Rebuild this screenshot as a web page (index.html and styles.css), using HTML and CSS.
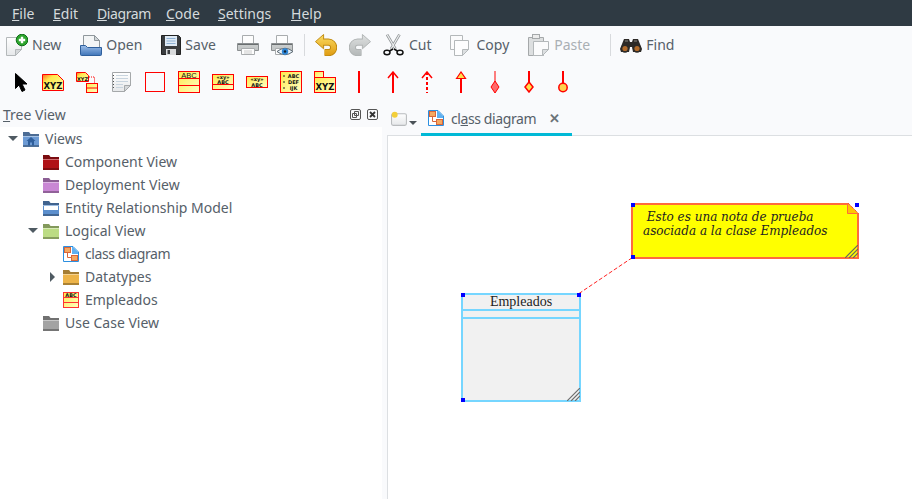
FILE: index.html
```html
<!DOCTYPE html>
<html lang="en">
<head>
    <meta charset="UTF-8">
    <meta name="viewport" content="width=device-width, initial-scale=1.0">
    <title>class diagram</title>
    <link rel="stylesheet" href="styles.css">
</head>
<body>
    <svg class="defs" width="0" height="0">
        <defs>
            <linearGradient id="yellow" x1="0" y1="0" x2="1" y2="1">
                <stop offset="0" stop-color="#ff6a1a"/>
                <stop offset="0.3" stop-color="#ffe94d"/>
                <stop offset="1" stop-color="#ffffa8"/>
            </linearGradient>
            <linearGradient id="cream" x1="0" y1="0" x2="1" y2="1">
                <stop offset="0" stop-color="#ffe94d"/>
                <stop offset="1" stop-color="#ffffc4"/>
            </linearGradient>
            <linearGradient id="paper" x1="0" y1="0" x2="0" y2="1">
                <stop offset="0" stop-color="#ffffff"/>
                <stop offset="1" stop-color="#e6e8ea"/>
            </linearGradient>
            <linearGradient id="gold" gradientUnits="userSpaceOnUse" x1="0" y1="0" x2="0" y2="22">
                <stop offset="0" stop-color="#fbdc62"/>
                <stop offset="1" stop-color="#e09c12"/>
            </linearGradient>
            <linearGradient id="silver" gradientUnits="userSpaceOnUse" x1="0" y1="0" x2="0" y2="22">
                <stop offset="0" stop-color="#dfe1e1"/>
                <stop offset="1" stop-color="#b4b8b8"/>
            </linearGradient>
            <linearGradient id="blue" x1="0" y1="0" x2="0" y2="1">
                <stop offset="0" stop-color="#9bbde8"/>
                <stop offset="1" stop-color="#3f74b8"/>
            </linearGradient>
            <symbol id="folder" viewBox="0 0 16 16">
                <path d="M0 1h6l1.500 2H16v13H0z" fill="currentColor"/>
                <path d="M0 1h6l1.500 2H16v2H0z" fill="#000" opacity=".3"/>
                <path d="M0 5h16v1H0z" fill="#fff" opacity=".4"/>
                <path d="M0 14h16v2H0z" fill="#000" opacity=".28"/>
            </symbol>
            <symbol id="diagram" viewBox="0 0 16 16">
                <path d="M.5.5h9.500l5.500 5.500v9.500H.5z" fill="#fff" stroke="#2c8fe0"/>
                <path d="M9 1h1l5 5v2H9z" fill="#5fb0f0"/>
                <rect x="1.500" y="1.500" width="6" height="5" fill="#f5a860" stroke="#d9663a"/>
                <rect x="8.500" y="9.500" width="6" height="5" fill="#f5a860" stroke="#d9663a"/>
                <path d="M4.500 6.500v5h4" fill="none" stroke="#d9663a"/>
            </symbol>
        </defs>
    </svg>

    <div class="menubar">
        <span><u>F</u>ile</span>
        <span><u>E</u>dit</span>
        <span class="tight"><u>D</u>iagram</span>
        <span><u>C</u>ode</span>
        <span><u>S</u>ettings</span>
        <span><u>H</u>elp</span>
    </div>

    <div class="toolbar">
        <div class="tool labelled">
            <svg class="icon" viewBox="0 0 22 22">
                <path d="M.5 3.500h15v12l-6 6H.5z" fill="url(#paper)" stroke="#b4b8ba"/>
                <path d="M9.500 21.500v-6h6z" fill="#d5d8da" stroke="#b4b8ba"/>
                <circle cx="16" cy="6" r="5.800" fill="#2da52d" stroke="#0f6e18"/>
                <path d="M16 2.800v6.400M12.800 6h6.400" stroke="#fff" stroke-width="2.400"/>
            </svg>
            <span>New</span>
        </div>
        <div class="tool labelled">
            <svg class="icon" viewBox="0 0 22 22">
                <path d="M3.500 1.500h11l5 5v8h-16z" fill="#f3f5f6" stroke="#8f979c"/>
                <path d="M14.500 1.500v5h5z" fill="#cfd4d7" stroke="#8f979c"/>
                <path d="M.5 11.500h5l2 2h14v7a1 1 0 0 1-1 1H1.500a1 1 0 0 1-1-1z" fill="url(#blue)" stroke="#2f5f9c"/>
            </svg>
            <span>Open</span>
        </div>
        <div class="tool labelled save-tool">
            <svg class="icon save" viewBox="0 0 20 22">
                <path d="M.5 1.500h17l2 2v17H.5z" fill="#3a3d40" stroke="#222"/>
                <rect x="4" y="2" width="12" height="10" fill="#dfeaf5"/>
                <path d="M5.500 4.500h9M5.500 7h9M5.500 9.500h9" stroke="#8fb2d4"/>
                <rect x="5" y="15" width="10" height="6" fill="#d8dadc"/>
                <rect x="6.500" y="16" width="2.500" height="4" fill="#3a3d40"/>
            </svg>
            <span>Save</span>
        </div>
        <div class="tool">
            <svg class="icon" viewBox="0 0 22 22">
                <path d="M5.500 1.500h11v8h-11z" fill="#fdfdfd" stroke="#a9acae"/>
                <path d="M.5 9.500h21v7H.5z" fill="url(#silver)" stroke="#8b8f91"/>
                <path d="M1 10h20v1H1z" fill="#6a6e70"/>
                <path d="M4.500 14.500h13v6h-13z" fill="#fdfdfd" stroke="#a9acae"/>
                <path d="M7 17h8M7 19h8" stroke="#ccc"/>
            </svg>
        </div>
        <div class="tool">
            <svg class="icon" viewBox="0 0 22 22">
                <path d="M5.500 1.500h11v8h-11z" fill="#fdfdfd" stroke="#a9acae"/>
                <path d="M.5 9.500h21v7H.5z" fill="url(#silver)" stroke="#8b8f91"/>
                <path d="M1 10h20v1H1z" fill="#6a6e70"/>
                <path d="M4.500 14.500h6v6h-6z" fill="#fdfdfd" stroke="#a9acae"/>
                <path d="M6 17.500q8-6.500 16 0-8 6.500-16 0z" fill="#e6f0f8" stroke="#5b6770"/>
                <circle cx="14" cy="17.500" r="3.200" fill="#2f86d6"/>
                <circle cx="14" cy="17.500" r="1.200" fill="#123"/>
            </svg>
        </div>
        <div class="sep"></div>
        <div class="tool">
            <svg class="icon" viewBox="0 0 23 22">
                <path d="M6 8h8a5.500 5.500 0 0 1 0 11h-4" fill="none" stroke="#c08a10" stroke-width="7.500"/>
                <path d="M9 0 .5 7.500 9 15z" fill="url(#gold)" stroke="#c08a10"/>
                <path d="M6 8h8a5.500 5.500 0 0 1 0 11h-4" fill="none" stroke="url(#gold)" stroke-width="5.500"/>
            </svg>
        </div>
        <div class="tool">
            <svg class="icon" viewBox="0 0 23 22">
                <path d="M17 8H9a5.500 5.500 0 0 0 0 11h4" fill="none" stroke="#b0b4b4" stroke-width="7.500"/>
                <path d="M14 0l8.500 7.500L14 15z" fill="url(#silver)" stroke="#b0b4b4"/>
                <path d="M17 8H9a5.500 5.500 0 0 0 0 11h4" fill="none" stroke="url(#silver)" stroke-width="5.500"/>
            </svg>
        </div>
        <div class="tool labelled">
            <svg class="icon" viewBox="0 0 22 22">
                <path d="M4 .5 12.500 15M16.500.5 8 15" stroke="#8f9395" stroke-width="2.600" fill="none"/>
                <path d="M4 .5 12.500 15M16.500.5 8 15" stroke="#eceeef" stroke-width="1.200" fill="none"/>
                <ellipse cx="4" cy="18.500" rx="3" ry="2.200" fill="none" stroke="#111" stroke-width="1.500"/>
                <ellipse cx="17" cy="18.500" rx="3" ry="2.200" fill="none" stroke="#111" stroke-width="1.500"/>
                <path d="M6.500 17 10 15M14.500 17 11 15" stroke="#111" stroke-width="1.500"/>
            </svg>
            <span>Cut</span>
        </div>
        <div class="tool labelled">
            <svg class="icon" viewBox="0 0 22 22">
                <path d="M.5 1.500h12v14H.5z" fill="#fbfbfc" stroke="#b4b8ba"/>
                <path d="M4.500 6.500h14v9l-6 6h-8z" fill="#fdfdfe" stroke="#b4b8ba"/>
                <path d="M12.500 21.500v-6h6z" fill="#dcdfe1" stroke="#b4b8ba"/>
            </svg>
            <span>Copy</span>
        </div>
        <div class="tool labelled disabled">
            <svg class="icon" viewBox="0 0 22 22">
                <path d="M.5 3.500h15v18H.5z" fill="#dddfe0" stroke="#a5a8aa"/>
                <rect x="4.500" y=".5" width="7" height="4" fill="#ececec" stroke="#a5a8aa"/>
                <path d="M5.500 7.500h15v8l-6 6h-9z" fill="#fbfbfc" stroke="#b4b8ba"/>
                <path d="M14.500 21.500v-6h6z" fill="#dcdfe1" stroke="#b4b8ba"/>
            </svg>
            <span>Paste</span>
        </div>
        <div class="sep wide"></div>
        <div class="tool labelled">
            <svg class="icon" viewBox="0 0 22 22">
                <path d="M4 5h5l1 3h2l1-3h5l4 10-1 3H13l-1-5h-2l-1 5H1l-1-3z" fill="#2d2a27"/>
                <circle cx="5" cy="14.500" r="4.200" fill="#2d2a27"/>
                <circle cx="17" cy="14.500" r="4.200" fill="#2d2a27"/>
                <circle cx="5" cy="14.500" r="2.600" fill="#b06a2a"/>
                <circle cx="17" cy="14.500" r="2.600" fill="#b06a2a"/>
                <path d="M5 7h3M14 7h3" stroke="#8a8580"/>
            </svg>
            <span>Find</span>
        </div>
    </div>

    <div class="toolbar palette">
        <div class="shape">
            <svg class="icon" viewBox="0 0 22 22">
                <path d="M7.500 2.500v15l3.500-3.500 3 6.500 3-1.500-3-6h5z" fill="#000" stroke="#000" stroke-linejoin="round"/>
            </svg>
        </div>
        <div class="shape">
            <svg class="icon" viewBox="0 0 22 22">
                <path d="M.5 3.500h15l6 6v10H.5z" fill="url(#yellow)" stroke="#f00"/>
                <text x="11" y="17.500" class="glyph big" text-anchor="middle">XYZ</text>
            </svg>
        </div>
        <div class="shape">
            <svg class="icon" viewBox="0 0 22 22">
                <path d="M.5 1.500h9l3 3v6H.5z" fill="url(#yellow)" stroke="#f00"/>
                <text x="6.500" y="9.500" class="glyph tiny" text-anchor="middle">XYZ</text>
                <path d="M13 6h5.500v6" fill="none" stroke="#f00" stroke-dasharray="1 1"/>
                <rect x="10.500" y="12.500" width="11" height="9" fill="url(#cream)" stroke="#f00"/>
                <path d="M11 17h10" stroke="#f00"/>
            </svg>
        </div>
        <div class="shape">
            <svg class="icon" viewBox="0 0 22 22">
                <path d="M2.500 1.500h18v13l-6 6h-12z" fill="url(#paper)" stroke="#a5a8aa"/>
                <path d="M14.500 20.500v-6h6z" fill="#d5d8da" stroke="#a5a8aa"/>
                <path d="M6 4.500h12M6 7.500h12M6 10.500h12M6 13.500h7M6 16.500h7" stroke="#c8d4de"/>
                <path d="M3.500 4v14" stroke="#555" stroke-dasharray="1 2"/>
            </svg>
        </div>
        <div class="shape">
            <svg class="icon" viewBox="0 0 22 22">
                <rect x="1.500" y="1.500" width="19" height="19" fill="none" stroke="#f00"/>
            </svg>
        </div>
        <div class="shape">
            <svg class="icon" viewBox="0 0 22 22">
                <rect x=".5" y=".5" width="21" height="21" fill="url(#cream)" stroke="#f00"/>
                <path d="M1 7.500h20M1 14.500h20" stroke="#f00"/>
                <text x="11" y="7" class="glyph serif" text-anchor="middle">ABC</text>
            </svg>
        </div>
        <div class="shape">
            <svg class="icon" viewBox="0 0 22 22">
                <rect x=".5" y="3.500" width="21" height="15" fill="url(#cream)" stroke="#f00"/>
                <path d="M1 13.500h20" stroke="#f00"/>
                <text x="11" y="8" class="glyph tiny" text-anchor="middle">«xy»</text>
                <text x="11" y="13" class="glyph tiny" text-anchor="middle">ABC</text>
            </svg>
        </div>
        <div class="shape">
            <svg class="icon" viewBox="0 0 22 22">
                <rect x=".5" y="5.500" width="21" height="11" fill="url(#cream)" stroke="#f00"/>
                <text x="11" y="10" class="glyph tiny" text-anchor="middle">«xy»</text>
                <text x="11" y="15.500" class="glyph tiny" text-anchor="middle">ABC</text>
            </svg>
        </div>
        <div class="shape">
            <svg class="icon" viewBox="0 0 22 22">
                <rect x=".5" y=".5" width="21" height="21" fill="url(#cream)" stroke="#f00"/>
                <path d="M3 5h2M3 11h2M3 17h2" stroke="#222"/>
                <text x="13.500" y="6.500" class="glyph tiny" text-anchor="middle">ABC</text>
                <text x="13.500" y="12.500" class="glyph tiny" text-anchor="middle">DEF</text>
                <text x="13.500" y="18.500" class="glyph tiny" text-anchor="middle">IJK</text>
            </svg>
        </div>
        <div class="shape">
            <svg class="icon" viewBox="0 0 22 22">
                <rect x=".5" y=".5" width="9" height="6" fill="url(#cream)" stroke="#f00"/>
                <rect x=".5" y="6.500" width="21" height="15" fill="url(#cream)" stroke="#f00"/>
                <text x="11" y="18.500" class="glyph big" text-anchor="middle">XYZ</text>
            </svg>
        </div>
        <div class="shape">
            <svg class="icon" viewBox="0 0 22 22"><path d="M11 0v22" stroke="#f00" stroke-width="2"/></svg>
        </div>
        <div class="shape">
            <svg class="icon" viewBox="0 0 22 22"><path d="M11 1v21" stroke="#f00" stroke-width="2"/><path d="M6 7l5-6 5 6" fill="none" stroke="#f00" stroke-width="1.500"/></svg>
        </div>
        <div class="shape">
            <svg class="icon" viewBox="0 0 22 22"><path d="M11 1v21" stroke="#f00" stroke-width="2" stroke-dasharray="3 2"/><path d="M6 7l5-6 5 6" fill="none" stroke="#f00" stroke-width="1.500"/></svg>
        </div>
        <div class="shape">
            <svg class="icon" viewBox="0 0 22 22"><path d="M11 7v15" stroke="#f00" stroke-width="2"/><path d="M6.500 7.500 11 1l4.500 6.500z" fill="#ffe14d" stroke="#f00" stroke-width="1.200"/></svg>
        </div>
        <div class="shape">
            <svg class="icon" viewBox="0 0 22 22"><path d="M11 0v12" stroke="#f00"/><path d="M11 10l4 6-4 6-4-6z" fill="#ff6a6a" stroke="#f00"/></svg>
        </div>
        <div class="shape">
            <svg class="icon" viewBox="0 0 22 22"><path d="M11 0v11" stroke="#f00" stroke-width="2"/><path d="M11 11l4 5-4 5-4-5z" fill="#ffe14d" stroke="#f00" stroke-width="1.500"/></svg>
        </div>
        <div class="shape">
            <svg class="icon" viewBox="0 0 22 22"><path d="M11 0v12" stroke="#f00" stroke-width="2"/><circle cx="11" cy="16.500" r="4.200" fill="#ffd24d" stroke="#f00" stroke-width="1.500"/></svg>
        </div>
    </div>

    <div class="main">
        <div class="side">
            <div class="panel-title">
                <span class="panel-name"><u>T</u>ree View</span>
                <span class="panel-btn">
                    <svg viewBox="0 0 11 11"><rect x=".5" y=".5" width="10" height="10" rx="1.500" fill="none" stroke="#555"/><path d="M4.500 2.500h4v4h-4zM2.500 4.500h4v4h-4z" fill="none" stroke="#555"/></svg>
                </span>
                <span class="panel-btn">
                    <svg viewBox="0 0 11 11"><rect x=".5" y=".5" width="10" height="10" rx="1.500" fill="none" stroke="#555"/><path d="M3 3l5 5M8 3l-5 5" stroke="#333" stroke-width="1.800"/></svg>
                </span>
            </div>
            <div class="tree">
                <div class="row">
                    <span class="arrow open"></span>
                    <svg class="node blue" viewBox="0 0 16 16">
                        <use href="#folder"/>
                        <path d="M8 6 3.500 10H5v4.500h2V11.500h2v3h2V10h1.500z" fill="#2f5f9c"/>
                    </svg>
                    <span>Views</span>
                </div>
                <div class="row depth1">
                    <span class="arrow"></span>
                    <svg class="node red"><use href="#folder"/></svg>
                    <span>Component View</span>
                </div>
                <div class="row depth1">
                    <span class="arrow"></span>
                    <svg class="node purple"><use href="#folder"/></svg>
                    <span>Deployment View</span>
                </div>
                <div class="row depth1">
                    <span class="arrow"></span>
                    <svg class="node navy" viewBox="0 0 16 16">
                        <use href="#folder"/>
                        <path d="M1 6h14v4H1z" fill="#fff"/>
                    </svg>
                    <span>Entity Relationship Model</span>
                </div>
                <div class="row depth1">
                    <span class="arrow open"></span>
                    <svg class="node green"><use href="#folder"/></svg>
                    <span>Logical View</span>
                </div>
                <div class="row depth2">
                    <span class="arrow"></span>
                    <svg class="node"><use href="#diagram"/></svg>
                    <span class="tight">class diagram</span>
                </div>
                <div class="row depth2">
                    <span class="arrow closed"></span>
                    <svg class="node orange"><use href="#folder"/></svg>
                    <span>Datatypes</span>
                </div>
                <div class="row depth2">
                    <span class="arrow"></span>
                    <svg class="node" viewBox="0 0 16 16">
                        <rect x=".5" y=".5" width="15" height="15" fill="url(#cream)" stroke="#f33"/>
                        <path d="M1 5.500h14M1 10.500h14" stroke="#f33"/>
                        <text x="8" y="5" class="glyph tiny" text-anchor="middle">ABC</text>
                    </svg>
                    <span>Empleados</span>
                </div>
                <div class="row depth1">
                    <span class="arrow"></span>
                    <svg class="node gray"><use href="#folder"/></svg>
                    <span>Use Case View</span>
                </div>
            </div>
        </div>

        <div class="content">
            <div class="tabbar">
                <div class="corner">
                    <svg class="corner-doc" viewBox="0 0 16 16">
                        <rect x=".5" y="2.500" width="14" height="11" rx="1.500" fill="url(#paper)" stroke="#b9bcbe"/>
                        <circle cx="3.500" cy="3.500" r="2.800" fill="#f3cf3a"/>
                    </svg>
                    <span class="corner-arrow"></span>
                </div>
                <div class="tab">
                    <svg class="node"><use href="#diagram"/></svg>
                    <span class="tab-name tight">cl<u>a</u>ss diagram</span>
                    <span class="tab-close">✕</span>
                </div>
            </div>
            <div class="canvas">
                <svg class="link" width="60" height="36" viewBox="0 0 60 36">
                    <path d="M2 35.500 54 .5" stroke="#f22" stroke-dasharray="4 2" fill="none"/>
                </svg>

                <div class="note">
                    <p>&nbsp;Esto es una nota de prueba<br>asociada a la clase Empleados</p>
                    <svg class="fold" width="12" height="12" viewBox="0 0 12 12">
                        <path d="M.5 0v10.500H12L.5 0z" fill="#ffc400" stroke="#ff6a3c"/>
                        <path d="M1 0h11v11z" fill="#fff"/>
                        <path d="M1 0l11 11" stroke="#e22" stroke-dasharray="1 1"/>
                    </svg>
                    <svg class="grip" width="13" height="13" viewBox="0 0 13 13">
                        <path d="M0 13 13 0M4 13l9-9M8 13l5-5" stroke="#6a6a5a" stroke-width="1.200"/>
                    </svg>
                    <span class="handle tl"></span>
                    <span class="handle tr"></span>
                    <span class="handle bl"></span>
                </div>

                <div class="class-box">
                    <div class="class-name">Empleados</div>
                    <div class="class-attrs"></div>
                    <div class="class-ops"></div>
                    <svg class="grip" width="13" height="13" viewBox="0 0 13 13">
                        <path d="M0 13 13 0M4 13l9-9M8 13l5-5" stroke="#6e6e6e" stroke-width="1.200"/>
                    </svg>
                    <span class="handle tl"></span>
                    <span class="handle tr"></span>
                    <span class="handle bl"></span>
                </div>
            </div>
        </div>
    </div>
</body>
</html>
```

FILE: styles.css
```css
* {
    box-sizing: border-box;
}
html, body {
    height: 100%;
}
body {
    margin: 0;
    padding: 0;
    display: flex;
    flex-direction: column;
    overflow: hidden;
    background-color: #f9fafc;
    color: #566069;
    font-family: "Noto Sans", "Open Sans", sans-serif;
    font-size: 14px;
}
.defs {
    display: block;
    flex: none;
}
.tight {
    letter-spacing: -0.4px;
}
.menubar {
    flex: none;
    height: 26px;
    display: grid;
    grid-template-columns: 41px 44px 69px 52px 73px auto;
    align-items: center;
    padding-left: 12px;
    background-color: #2f3a43;
    color: #d5dadd;
}
.toolbar {
    flex: none;
    height: 37px;
    display: flex;
    align-items: center;
}
.tool {
    display: flex;
    align-items: center;
    gap: 4px;
    padding: 0 6px;
}
.tool.labelled {
    padding-right: 13px;
}
.tool.save-tool {
    padding-right: 15px;
}
.tool.disabled {
    color: #a9afb4;
}
.icon {
    width: 22px;
    height: 22px;
    flex: none;
    display: block;
}
.icon.save {
    width: 20px;
}
.sep {
    width: 1px;
    height: 22px;
    margin: 0 4px 0 5px;
    background-color: #d8dadd;
}
.sep.wide {
    margin: 0 3px 0 7px;
}
.palette {
    padding-left: 2px;
}
.shape {
    width: 34px;
    display: flex;
    justify-content: center;
}
.glyph {
    font-family: "DejaVu Sans", sans-serif;
    font-weight: bold;
    fill: #111;
}
.glyph.big {
    font-size: 8.500px;
}
.glyph.tiny {
    font-size: 5px;
}
.glyph.serif {
    font-family: "Liberation Sans", sans-serif;
    font-weight: normal;
    font-size: 7.500px;
}
.main {
    flex: 1;
    display: flex;
    min-height: 0;
}
.side {
    width: 382px;
    flex: none;
    display: flex;
    flex-direction: column;
}
.panel-title {
    height: 27px;
    flex: none;
    display: flex;
    align-items: center;
    padding: 2px 4px 1px 3px;
    gap: 6px;
}
.panel-name {
    flex: 1;
}
.panel-btn {
    width: 11px;
    height: 11px;
    display: block;
}
.panel-btn svg {
    display: block;
    width: 11px;
    height: 11px;
}
.tree {
    flex: 1;
    background-color: #fff;
}
.row {
    height: 23px;
    display: flex;
    align-items: center;
    padding-left: 2px;
}
.row.depth1 {
    padding-left: 22px;
}
.row.depth2 {
    padding-left: 42px;
}
.arrow {
    width: 21px;
    flex: none;
    display: flex;
    justify-content: center;
}
.arrow.open::before {
    content: "";
    border-style: solid;
    border-width: 5px 5px 0;
    border-color: #4f5a62 transparent transparent;
}
.arrow.closed::before {
    content: "";
    border-style: solid;
    border-width: 5px 0 5px 5px;
    border-color: transparent transparent transparent #4f5a62;
}
.node {
    width: 16px;
    height: 16px;
    flex: none;
    margin-right: 6px;
}
.node.blue { color: #6d9bd4; }
.node.red { color: #b01217; }
.node.purple { color: #c987d4; }
.node.navy { color: #5c8fcd; }
.node.green { color: #bcdc84; }
.node.orange { color: #edb449; }
.node.gray { color: #a3a3a3; }
.content {
    flex: 1;
    margin-left: 5px;
    display: flex;
    flex-direction: column;
    min-width: 0;
}
.tabbar {
    height: 35px;
    flex: none;
    display: flex;
    align-items: flex-start;
}
.corner {
    width: 34px;
    height: 35px;
    display: flex;
    align-items: center;
    padding: 4px 0 0 4px;
    gap: 1px;
}
.corner-doc {
    width: 17px;
    height: 17px;
}
.corner-arrow {
    margin-top: 6px;
    border-style: solid;
    border-width: 4px 4px 0;
    border-color: #4a5157 transparent transparent;
}
.tab {
    position: relative;
    z-index: 1;
    width: 151px;
    height: 36px;
    display: flex;
    align-items: center;
    padding: 3px 0 0 7px;
    border-bottom: 3px solid #00b9d6;
}
.tab .node {
    margin-right: 7px;
}
.tab-close {
    margin-left: 13px;
    font-size: 13px;
    font-weight: bold;
    color: #6b7378;
}
.canvas {
    flex: 1;
    position: relative;
    background-color: #fff;
    border-top: 1px solid #dcdfe2;
    border-left: 1px solid #dcdfe2;
}
.link {
    position: absolute;
    left: 189px;
    top: 122px;
}
.note {
    position: absolute;
    left: 243px;
    top: 67px;
    width: 228px;
    height: 56px;
    background-color: #ffff00;
    border: 2px solid #ff6b3d;
    color: #222;
    font-family: "DejaVu Serif", serif;
    font-style: italic;
    font-size: 12px;
}
.note p {
    margin: 0;
    padding: 5px 0 0 10px;
    line-height: 14px;
}
.fold {
    position: absolute;
    right: -2px;
    top: -2px;
}
.grip {
    position: absolute;
    right: -1px;
    bottom: -1px;
}
.class-box {
    position: absolute;
    left: 73px;
    top: 157px;
    width: 120px;
    height: 109px;
    display: flex;
    flex-direction: column;
    background-color: #f1f1f1;
    border: 2px solid #76d6ff;
    font-family: "Liberation Serif", serif;
    font-size: 14px;
    color: #222;
}
.class-name {
    height: 16px;
    text-align: center;
    line-height: 14px;
    border-bottom: 2px solid #76d6ff;
}
.class-attrs {
    height: 6px;
    border-bottom: 2px solid #76d6ff;
    box-sizing: content-box;
}
.class-ops {
    flex: 1;
}
.handle {
    position: absolute;
    width: 4px;
    height: 4px;
    background-color: #0000ff;
}
.handle.tl {
    left: -2px;
    top: -2px;
}
.handle.tr {
    right: -2px;
    top: -2px;
}
.handle.bl {
    left: -2px;
    bottom: -2px;
}
```
